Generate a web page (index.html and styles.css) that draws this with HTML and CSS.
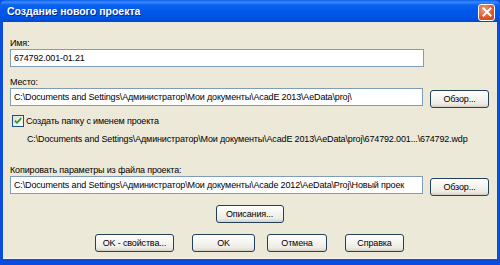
FILE: index.html
```html
<!DOCTYPE html>
<html lang="ru">
<head>
<meta charset="utf-8">
<title>Создание нового проекта</title>
<link rel="stylesheet" href="styles.css">
</head>
<body>
<div class="window">
  <div class="titlebar">
    <span class="title">Создание нового проекта</span>
    <span class="close">
      <svg width="10" height="10" viewBox="0 0 10 10"><path d="M1.5 1.5 L8.5 8.5 M8.5 1.5 L1.5 8.5" stroke="#fff" stroke-width="2" stroke-linecap="square"/></svg>
    </span>
  </div>
  <div class="client">
    <div class="label first">Имя:</div>
    <div class="row">
      <div class="field name">674792.001-01.21</div>
    </div>

    <div class="label second">Место:</div>
    <div class="row">
      <div class="field">C:\Documents and Settings\Администратор\Мои документы\AcadE 2013\AeData\proj\</div>
      <button class="btn browse">Обзор...</button>
    </div>

    <div class="check">
      <span class="box">
        <svg width="8" height="8" viewBox="0 0 8 8"><path d="M0.8 3.6 L3 5.8 L7.2 1.2" fill="none" stroke="#21a121" stroke-width="1.8"/></svg>
      </span>
      Создать папку с именем проекта
    </div>
    <div class="path">C:\Documents and Settings\Администратор\Мои документы\AcadE 2013\AeData\proj\674792.001...\674792.wdp</div>

    <div class="label third">Копировать параметры из файла проекта:</div>
    <div class="row">
      <div class="field">C:\Documents and Settings\Администратор\Мои документы\Acade 2012\AeData\Proj\Новый проек</div>
      <button class="btn browse">Обзор...</button>
    </div>

    <div class="center">
      <button class="btn descr">Описания...</button>
    </div>

    <div class="buttons">
      <button class="btn okprops">OK - свойства...</button>
      <button class="btn ok">OK</button>
      <button class="btn cancel">Отмена</button>
      <button class="btn help">Справка</button>
    </div>
  </div>
</div>
</body>
</html>
```

FILE: styles.css
```css
html, body { margin: 0; padding: 0; }
body { width: 500px; height: 265px; overflow: hidden; font-family: "Liberation Sans", Arial, sans-serif; font-size: 9px; letter-spacing: -0.15px; color: #000; }

.window { width: 500px; height: 265px; box-sizing: border-box; display: flex; flex-direction: column; background: #0a4ddc; padding: 0 3px 6px 3px; }

.titlebar { height: 22px; margin: 0 -3px; padding: 0 5px 0 7px; display: flex; align-items: center; justify-content: space-between;
  background: linear-gradient(#0b5df0 0%, #3c8cfd 10%, #0b62f0 22%, #0058ea 50%, #0054e3 80%, #0048d2 100%); border-radius: 6px 6px 0 0; }
.title { color: #fff; font-family: "Liberation Sans Narrow", "Liberation Sans", sans-serif; font-weight: bold; font-size: 10.5px; letter-spacing: 0; text-shadow: 1px 1px #0a2a8a; }
.close { width: 15px; height: 15px; border: 1px solid #fff; border-radius: 3px; display: flex; align-items: center; justify-content: center;
  background: radial-gradient(circle at 35% 30%, #f19c7c, #e35a2e 55%, #c4401a); margin-top: 2px; }

.client { flex: 1; background: #ece9d8; padding: 0 8px 0 7px; border-bottom: 1px solid #f8f6ee; }

.label { height: 12px; line-height: 12px; }
.label.first { margin-top: 15px; }
.label.second { margin-top: 9px; }
.label.third { margin-top: 18px; }

.row { display: flex; align-items: flex-start; gap: 7px; }
.field { width: 411px; height: 16px; line-height: 16px; border: 1px solid #7f9db9; background: #fff; padding: 0 0 0 3px; box-sizing: content-box; white-space: nowrap; overflow: hidden; }
.row .field { width: 409px; }

.btn { font-family: inherit; font-size: 9px; letter-spacing: -0.15px; white-space: nowrap; color: #000; height: 18px; padding: 0; border: 1px solid #21405e; border-radius: 3px;
  background: linear-gradient(#ffffff 0%, #f6f5f0 40%, #ecebe4 80%, #d6d0c5 100%); box-sizing: border-box; }
.browse { width: 59px; margin-top: 2px; }

.check { display: flex; align-items: center; gap: 2px; margin-top: 6px; height: 13px; padding-left: 2px; }
.box { width: 10px; height: 10px; border: 1px solid #1c5180; background: linear-gradient(135deg, #dcdcd7, #fff); display: flex; align-items: center; justify-content: center; }
.path { margin-top: 6px; padding-left: 17px; height: 13px; line-height: 13px; white-space: nowrap; }

.center { display: flex; justify-content: center; margin-top: 9px; }
.descr { width: 68px; }

.buttons { display: flex; margin-top: 11px; padding-left: 85px; gap: 18px; }
.okprops { width: 79px; }
.ok { width: 63px; }
.cancel { width: 60px; margin-left: -6px; }
.help { width: 59px; }
```
